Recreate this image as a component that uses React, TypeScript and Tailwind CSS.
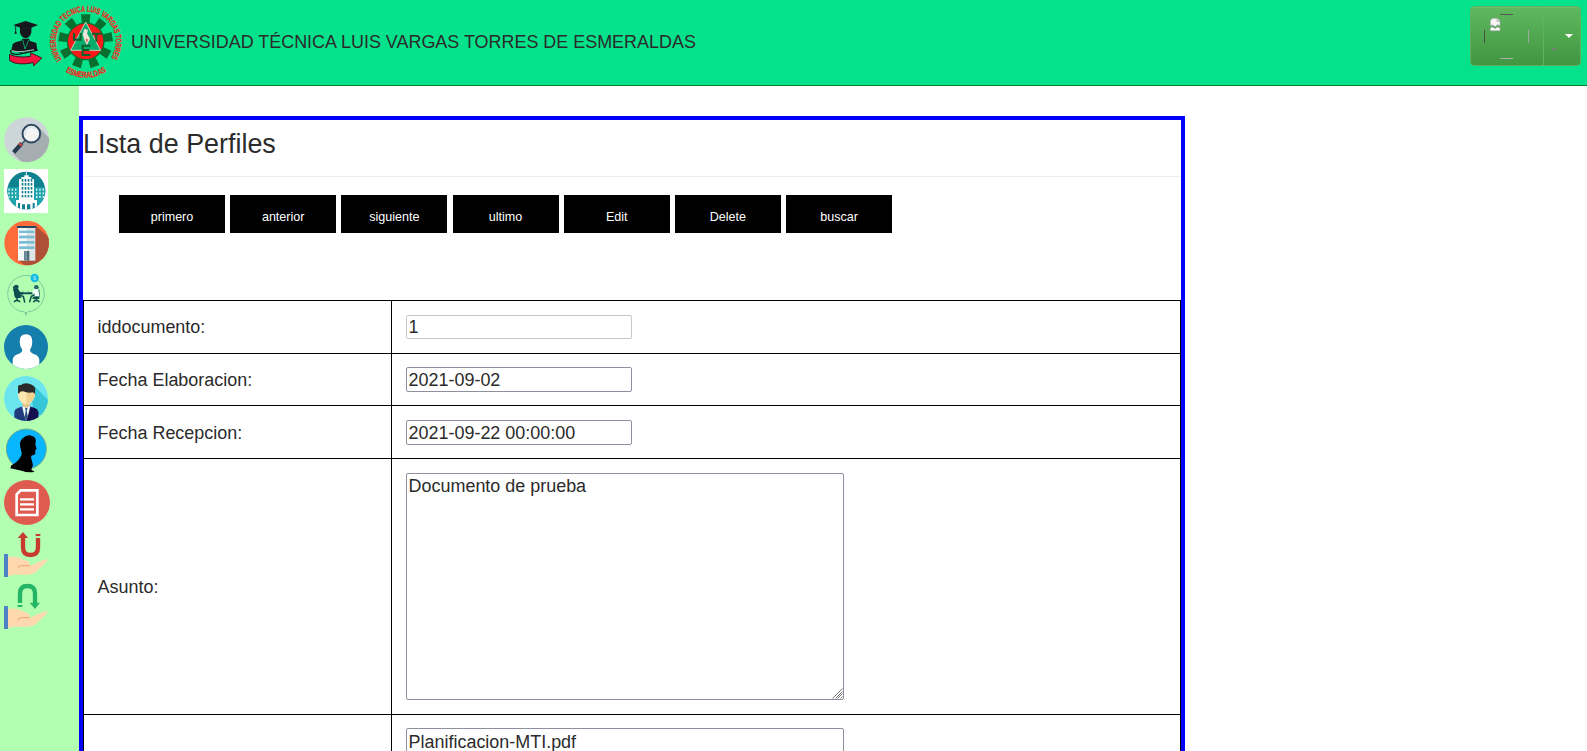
import type { ReactNode } from "react";

function Icon({ top, children }: { top: number; children: ReactNode }) {
  return (
    <a href="#" className="block h-[52px] w-[50px] shrink-0">
      <svg viewBox={`0 ${top} 150 156`} className="block h-[52px] w-[50px] overflow-visible">
        {children}
      </svg>
    </a>
  );
}

function Graduate() {
  return (
    <svg viewBox="27 57 102 144" className="block h-[48px] w-[34px] shrink-0">
      <path d="M40 75 L77 63 L114 75 L94 83 V90 Q77 82 60 90 V83 Z" fill="#15181c" />
      <path d="M47 76 V98" stroke="#15181c" strokeWidth="2.5" />
      <path d="M43 101 L47 92 L51 101 Z" fill="#15181c" />
      <path d="M60 88 Q77 82 94 88 V98 Q90 112 77 115 Q64 112 60 98 Z" fill="#15181c" />
      <path d="M67 116 H87 L90 123 L109 129 L112 152 Q100 148 90 152 L62 158 L34 152 L38 132 L48 126 L64 122 Z" fill="#15181c" />
      <path d="M68 119 L75 147 L86 120" fill="none" stroke="#05e28c" strokeWidth="2" />
      <path d="M33 150 Q30 158 36 160 Q50 166 68 160 L113 150" fill="none" stroke="#15181c" strokeWidth="4" />
      <path d="M35 152 Q52 157 72 154 L102 149" fill="none" stroke="#a9c9b8" strokeWidth="3" />
      <path d="M28 163 Q55 175 92 169 L92 158 L126 174 L101 198 L100 188 Q52 198 29 182 Z" fill="#f5163f" stroke="#15181c" strokeWidth="2.500" />
    </svg>
  );
}

const TEETH = [0, 40, 80, 120, 160, 200, 240, 280, 320];

function Seal() {
  return (
    <svg viewBox="143 12 222 225" className="block h-[75px] w-[74px] shrink-0 overflow-visible">
      <defs>
        <path id="seal-top" d="M184 178.500 A90 90 0 1 1 331 175" fill="none" />
        <path id="seal-bottom" d="M195 214 A109 109 0 0 0 321 212" fill="none" />
      </defs>
      {TEETH.map((a) => (
        <path key={a} d="M245 74 L242 43 H270 L267 74 Z" fill="#08702f" transform={`rotate(${a} 256 124)`} />
      ))}
      <circle cx="256" cy="124" r="57" fill="#08702f" />
      <circle cx="256" cy="124" r="53" fill="#fb1919" />
      <path d="M256 66 L301 151 H211 Z" fill="#0aac6c" stroke="#b5d5bd" strokeWidth="3" />
      <path d="M252 86 L263 90 L260 100 L269 116 L260 136 L253 122 L247 104 Z" fill="#f2e2dc" />
      <path d="M256 115 L263 119 L259 130 Z" fill="#d95442" />
      <g fill="none" stroke="#08602d" strokeWidth="6">
        <path d="M221 99 V119 H241 V99" />
        <path d="M275 101 H303 M288 101 V125" />
        <path d="M270 137 H247 V165 H270 M247 150 H267" />
      </g>
      <g fill="#f0271c" stroke="#f0271c" strokeWidth="0.800" fontFamily="Liberation Sans" fontWeight="700">
        <text fontSize="25">
          <textPath href="#seal-top" textLength="391" lengthAdjust="spacingAndGlyphs">UNIVERSIDAD TECNICA LUIS VARGAS TORRES</textPath>
        </text>
        <text fontSize="25">
          <textPath href="#seal-bottom" startOffset="1" textLength="130" lengthAdjust="spacingAndGlyphs">ESMERALDAS</textPath>
        </text>
      </g>
    </svg>
  );
}

function BuildingWindows() {
  return (
    <g fill="#0f8290">
      {[207, 219, 231].map((y) =>
        [65, 74, 83, 92].map((x) => <rect key={`${x}-${y}`} x={x} y={y} width="5" height="8" />),
      )}
      {[243, 255].map((y) =>
        [65, 74, 83, 92].map((x) => <rect key={`${x}-${y}`} x={x} y={y} width="5" height="7" />),
      )}
    </g>
  );
}

function Hand({ dy }: { dy: number }) {
  return (
    <g transform={`translate(0 ${dy})`}>
      <path d="M24 96 Q43 92 59 99 L84 109 Q92 113 86 121 Q99 121 109 113 L132 104 Q144 101 142 107 L111 138 Q100 149 80 149 L42 149 L24 153 Z" fill="#fdd7ad" />
      <path d="M54 130 Q55 122 64 122 H89" fill="none" stroke="#f5a06c" strokeWidth="3" />
      <rect x="12" y="87" width="12" height="69" fill="#4d83c4" />
    </g>
  );
}

function Sidebar() {
  return (
    <nav className="flex w-[79px] shrink-0 flex-col bg-[#b3ffb1] pt-[31px]">
      <Icon top={21}>
        <clipPath id="lens-disc"><circle cx="80" cy="89" r="67.500" /></clipPath>
        <circle cx="80" cy="89" r="67.500" fill="#ccd5d8" />
        <path d="M115 51 L165 101 L120 180 L86 176 L38 130 L75 95 Z" fill="#a5adb0" clipPath="url(#lens-disc)" />
        <path d="M76 91 L60 106" stroke="#42586c" strokeWidth="5" />
        <path d="M65 100 L41 127" stroke="#273b4e" strokeWidth="13" />
        <path d="M57 100 L65 107" stroke="#e8453d" strokeWidth="6" />
        <circle cx="94" cy="71" r="26.500" fill="#f3f5f5" stroke="#2f485f" strokeWidth="6" />
        <path d="M77 77 A18 18 0 0 1 106 57" fill="none" stroke="#dfe5e7" strokeWidth="5" />
      </Icon>

      <Icon top={177}>
        <clipPath id="city-disc"><circle cx="79" cy="242" r="57" /></clipPath>
        <rect x="12" y="177" width="132" height="132" fill="#fff" />
        <g clipPath="url(#city-disc)">
          <rect x="20" y="183" width="120" height="120" fill="#0f8290" />
          <path d="M20 232 H57 V303 H20 Z M102 232 H140 V303 H102 Z" fill="#20a5ad" />
          <g fill="#e2fafa">
            {[236, 247, 258].map((y) =>
              [25, 35, 45, 108, 118, 128].map((x) => <rect key={`${x}-${y}`} x={x} y={y} width="4" height="6" />),
            )}
          </g>
          <path d="M57 207 H64 V201 H73 V196 H86 V201 H94 V207 H102 V270 H57 Z" fill="#fff" />
          <path d="M79 185 V196" stroke="#d8f5f5" strokeWidth="3" />
          <BuildingWindows />
          <path d="M48 270 H111 V303 H48 Z" fill="#fff" />
          <path d="M54 279 H60 V300 H54 Z M66 283 H75 V298 H66 Z M81 283 H91 V298 H81 Z M98 279 H104 V300 H98 Z" fill="#0f8290" />
        </g>
      </Icon>

      <Icon top={18}>
        <clipPath id="office-disc"><circle cx="80" cy="84" r="67" /></clipPath>
        <circle cx="80" cy="84" r="67" fill="#ff6c3c" />
        <path d="M109 34 L155 75 V155 H80 L55 137 Z" fill="#ae5035" clipPath="url(#office-disc)" />
        <rect x="54" y="38" width="27" height="99" fill="#f5f9fb" />
        <rect x="81" y="38" width="25" height="99" fill="#dce4e8" />
        <rect x="51" y="33" width="58" height="6" fill="#244b60" />
        <g fill="#78bdd1">
          <rect x="57" y="47" width="46" height="7" /><rect x="57" y="62" width="46" height="8" />
          <rect x="57" y="78" width="46" height="8" /><rect x="57" y="94" width="46" height="8" />
        </g>
        <rect x="72" y="108" width="8" height="29" fill="#6c8795" />
        <rect x="80" y="108" width="8" height="29" fill="#506b79" />
      </Icon>

      <Icon top={174}>
        <path d="M73 291 A55 55 0 1 1 83 291 L78 295 Z" fill="none" stroke="#75cfa0" strokeWidth="3" />
        <path d="M78 292 V301" stroke="#6fb58f" strokeWidth="4" />
        <circle cx="104" cy="189" r="12.500" fill="#15bbe3" />
        <text x="104" y="194" textAnchor="middle" fontFamily="Liberation Sans" fontWeight="700" fontSize="14" fill="#a9e9f8">$</text>
        <g fill="none" stroke="#0b4f50" strokeWidth="4.500" strokeLinecap="round">
          <path d="M63 235 H101" strokeWidth="6" />
          <path d="M41 216 L46 244 H58 M51 244 V257 M43 260 L51 254 L59 260 M53 240 L70 244 L74 261" />
          <path d="M116 225 L117 243 H104 M109 244 V257 M101 260 L109 254 L117 260 M104 240 L94 244 L89 260" />
          <path d="M69 228 L73 234 M85 228 L81 234" stroke="#6fa58a" strokeWidth="2" />
        </g>
        <circle cx="49" cy="216" r="7" fill="#0b4f50" />
        <path d="M40 222 L54 221 L60 231 L68 232 V239 H60 L64 249 H46 Z" fill="#0b4f50" />
        <path d="M99 246 H118 V252 H97 Z" fill="#0b4f50" />
        <circle cx="109" cy="217" r="7" fill="#27686a" />
        <path d="M103 223 L115 222 L118 244 H103 L105 236 H97 V232 Z" fill="#f1fffa" />
      </Icon>

      <Icon top={15}>
        <clipPath id="user-disc"><circle cx="78" cy="81" r="66" /></clipPath>
        <circle cx="78" cy="81" r="66" fill="#147fac" />
        <path d="M38 137 V119 Q40 107 53 103 Q66 99 67 90 Q59 80 59 65 Q59 43 78 43 Q97 43 97 65 Q97 80 90 90 Q91 99 103 103 Q116 107 118 119 V137 Q102 147 78 147 Q54 147 38 137 Z" fill="#fff" clipPath="url(#user-disc)" />
      </Icon>

      <Icon top={171}>
        <clipPath id="exec-disc"><ellipse cx="78" cy="235.500" rx="66" ry="67.500" /></clipPath>
        <g clipPath="url(#exec-disc)">
          <rect x="10" y="165" width="140" height="142" fill="#6ce5ef" />
          <path d="M103 198 L150 245 V285 H102 L96 240 Z" fill="#37c5d8" />
          <path d="M43 307 V276 Q44 267 54 264 L70 258 H87 L104 264 Q113 267 115 276 V307 Z" fill="#203b7b" />
          <path d="M79 261 H88 L104 264 Q113 267 115 276 V307 H79 Z" fill="#15104d" />
          <path d="M66 259 H91 L84 287 L79 303 L73 287 Z" fill="#edf8fa" />
          <path d="M75 263 H83 L80 272 L84 291 L79 302 L74 291 L77 272 Z" fill="#31537c" />
          <path d="M67 242 H90 V255 L79 265 L67 255 Z" fill="#e7c184" />
          <path d="M54 209 H105 V226 Q102 243 88 251 Q79 256 70 251 Q56 243 54 226 Z" fill="#ffe7b2" />
          <path d="M79 209 H105 V226 Q101 245 79 254 Z" fill="#f0d190" />
          <path d="M54 218 V202 Q53 193 63 195 Q70 188 88 191 Q105 196 106 207 L104 222 L99 217 Q84 221 69 214 L60 215 L57 222 Z" fill="#2b2b2b" />
        </g>
      </Icon>

      <Icon top={12}>
        <circle cx="79" cy="72" r="60" fill="#08b5ff" stroke="#6eaa8b" strokeWidth="3" />
        <path d="M61 97 Q68 88 63 76 Q55 48 69 39 Q83 26 99 34 Q109 40 107 50 L106 60 L110 71 L106 75 L106 84 Q105 91 96 91 Q91 95 95 104 L99 120 L94 134 L104 140 Q85 145 65 137 L31 130 L34 121 Q52 112 61 97 Z" fill="#000" />
      </Icon>

      <Icon top={168}>
        <ellipse cx="81" cy="232.500" rx="69" ry="67.500" fill="#df5b50" />
        <path d="M62 196 H112 V270 H50 V208 Z" fill="none" stroke="#fff" strokeWidth="8" />
        <path d="M60 223 H102 M60 238 H102 M60 253 H102" stroke="#fff" strokeWidth="7" />
      </Icon>

      <Icon top={24}>
        <path d="M69 37 V67 Q69 90 91 90 Q114 90 114 67 V39" fill="none" stroke="#c83a2d" strokeWidth="13" />
        <path d="M69 21 L84 39 H53 Z" fill="#c83a2d" />
        <rect x="107" y="27" width="14" height="6" fill="#c83a2d" />
        <Hand dy={0} />
      </Icon>

      <Icon top={180}>
        <path d="M60 234 V205 Q60 183 82 183 Q105 183 105 205 V234" fill="none" stroke="#25b567" strokeWidth="13" />
        <path d="M89 233 H120 L105 252 Z" fill="#25b567" />
        <rect x="53" y="240" width="14" height="6" fill="#25b567" />
        <Hand dy={156} />
      </Icon>
    </nav>
  );
}

function UserMenu() {
  return (
    <div className="mt-[6px] mr-[6px] flex h-[60px] w-[111px] rounded-[4px] border border-[#5cb05a] bg-linear-to-b from-[#5fb95f] to-[#419641] shadow-[inset_0_1px_0_rgba(255,255,255,0.1)]">
      <svg viewBox="33 21 327 174" className="block h-[58px] w-[109px]">
        <path d="M250.500 18 V198" stroke="#60b35b" strokeWidth="3" />
        <path d="M120 43.500 H159" stroke="#595459" strokeWidth="3" />
        <path d="M121 175.500 H159" stroke="#b1b0ad" strokeWidth="3" />
        <path d="M73.500 90 V129" stroke="#42543f" strokeWidth="3" />
        <path d="M205.500 90 V129" stroke="#a2aaa0" strokeWidth="3" />
        <path d="M91 77 V66 Q91 55 103 55 H112 L120 63 V77 L113 74 L105 80 L98 75 Z" fill="#f6f6f6" stroke="#aaa5ad" strokeWidth="2" />
        <path d="M111 55 V64 H120" fill="none" stroke="#918d96" strokeWidth="2" />
        <path d="M91 92 V84 L98 81 L105 86 L113 81 L120 84 V92 Z" fill="#fff" stroke="#aaa5ad" strokeWidth="2" />
        <path d="M273 144 H291 L282 153 Z" fill="#7c7f7a" />
        <path d="M315 102 H339 L327 114 Z" fill="#fff" />
      </svg>
    </div>
  );
}

const ACTIONS = ["primero", "anterior", "siguiente", "ultimo", "Edit", "Delete", "buscar"];

function Field({ label, height, pad = "pt-px", children }: { label: string; height: string; pad?: string; children: ReactNode }) {
  return (
    <div className={`flex border-b border-black ${height}`}>
      <div className={`flex w-[308px] shrink-0 items-center border-r border-black pl-[13.6px] ${pad}`}>{label}</div>
      <div className="flex flex-1 items-start pt-[14px] pl-[14px]">{children}</div>
    </div>
  );
}

const INPUT = "block w-[226px] rounded-[2px] border bg-white px-[1.600px] outline-none";

export default function App() {
  return (
    <div className="flex h-[751px] w-full flex-col overflow-hidden bg-white font-['Liberation_Sans',Arial,sans-serif] text-[17.94px] text-[#2b2b2b]">
      <header className="flex h-[86px] shrink-0 items-start justify-between border-b border-[#087d28] bg-[#05e28c]">
        <div className="flex items-start pl-[9px]">
          <div className="pt-[19px]"><Graduate /></div>
          <div className="ml-[5px] pt-[4px]"><Seal /></div>
          <span className="ml-[9px] pt-[31px] leading-[22px] whitespace-nowrap">UNIVERSIDAD TÉCNICA LUIS VARGAS TORRES DE ESMERALDAS</span>
        </div>
        <UserMenu />
      </header>

      <div className="flex min-h-0 flex-1">
        <Sidebar />
        <main className="mt-[30px] flex w-[1106px] shrink-0 flex-col overflow-hidden border-4 border-b-0 border-[#0000ff]">
          <h1 className="h-[57px] shrink-0 border-b border-[#eeeeee] pt-[8px] text-[26.9px] leading-[32px]">LIsta de Perfiles</h1>
          <div className="mt-[18px] flex shrink-0 gap-[5.2px] pl-[36px]">
            {ACTIONS.map((a) => (
              <button key={a} type="button" className="h-[38px] w-[106px] bg-black pt-[7px] text-[12.56px] text-white">{a}</button>
            ))}
          </div>

          <div className="mt-[67px] shrink-0 border border-b-0 border-black">
            <Field label="iddocumento:" height="h-[53px]">
              <input className={`${INPUT} h-[24px] border-[#c7c7cd] leading-[22px]`} defaultValue="1" />
            </Field>
            <Field label="Fecha Elaboracion:" height="h-[52px]">
              <input className={`${INPUT} -mt-px h-[25px] border-[#8f8f9d] pt-[2px] leading-[21px]`} defaultValue="2021-09-02" />
            </Field>
            <Field label="Fecha Recepcion:" height="h-[53px]" pad="pt-[2px]">
              <input className={`${INPUT} h-[25px] border-[#8f8f9d] pt-[2px] leading-[21px]`} defaultValue="2021-09-22 00:00:00" />
            </Field>
            <Field label="Asunto:" height="h-[256px]">
              <div className="relative h-[227px] w-[438px]">
                <textarea className="block h-[227px] w-[438px] resize-none rounded-[2px] border border-[#8f8f9d] px-[1.600px] py-[2px] leading-[21px] outline-none" defaultValue="Documento de prueba" />
                <svg viewBox="0 0 11 11" className="absolute right-[1px] bottom-[1px] h-[11px] w-[11px]">
                  <path d="M0.500 10.500 L10.500 0.500 M3.500 10.500 L10.500 3.500 M5.500 10.500 L10.500 5.500 M8.500 10.500 L10.500 8.500" stroke="#777" strokeWidth="1" fill="none" />
                </svg>
              </div>
            </Field>
            <Field label="" height="h-[54px]">
              <input className="-mt-px block h-[25px] w-[438px] rounded-[2px] border border-[#8f8f9d] px-[1.600px] pt-[3px] leading-[20px] outline-none" defaultValue="Planificacion-MTI.pdf" />
            </Field>
          </div>
        </main>
      </div>
    </div>
  );
}
